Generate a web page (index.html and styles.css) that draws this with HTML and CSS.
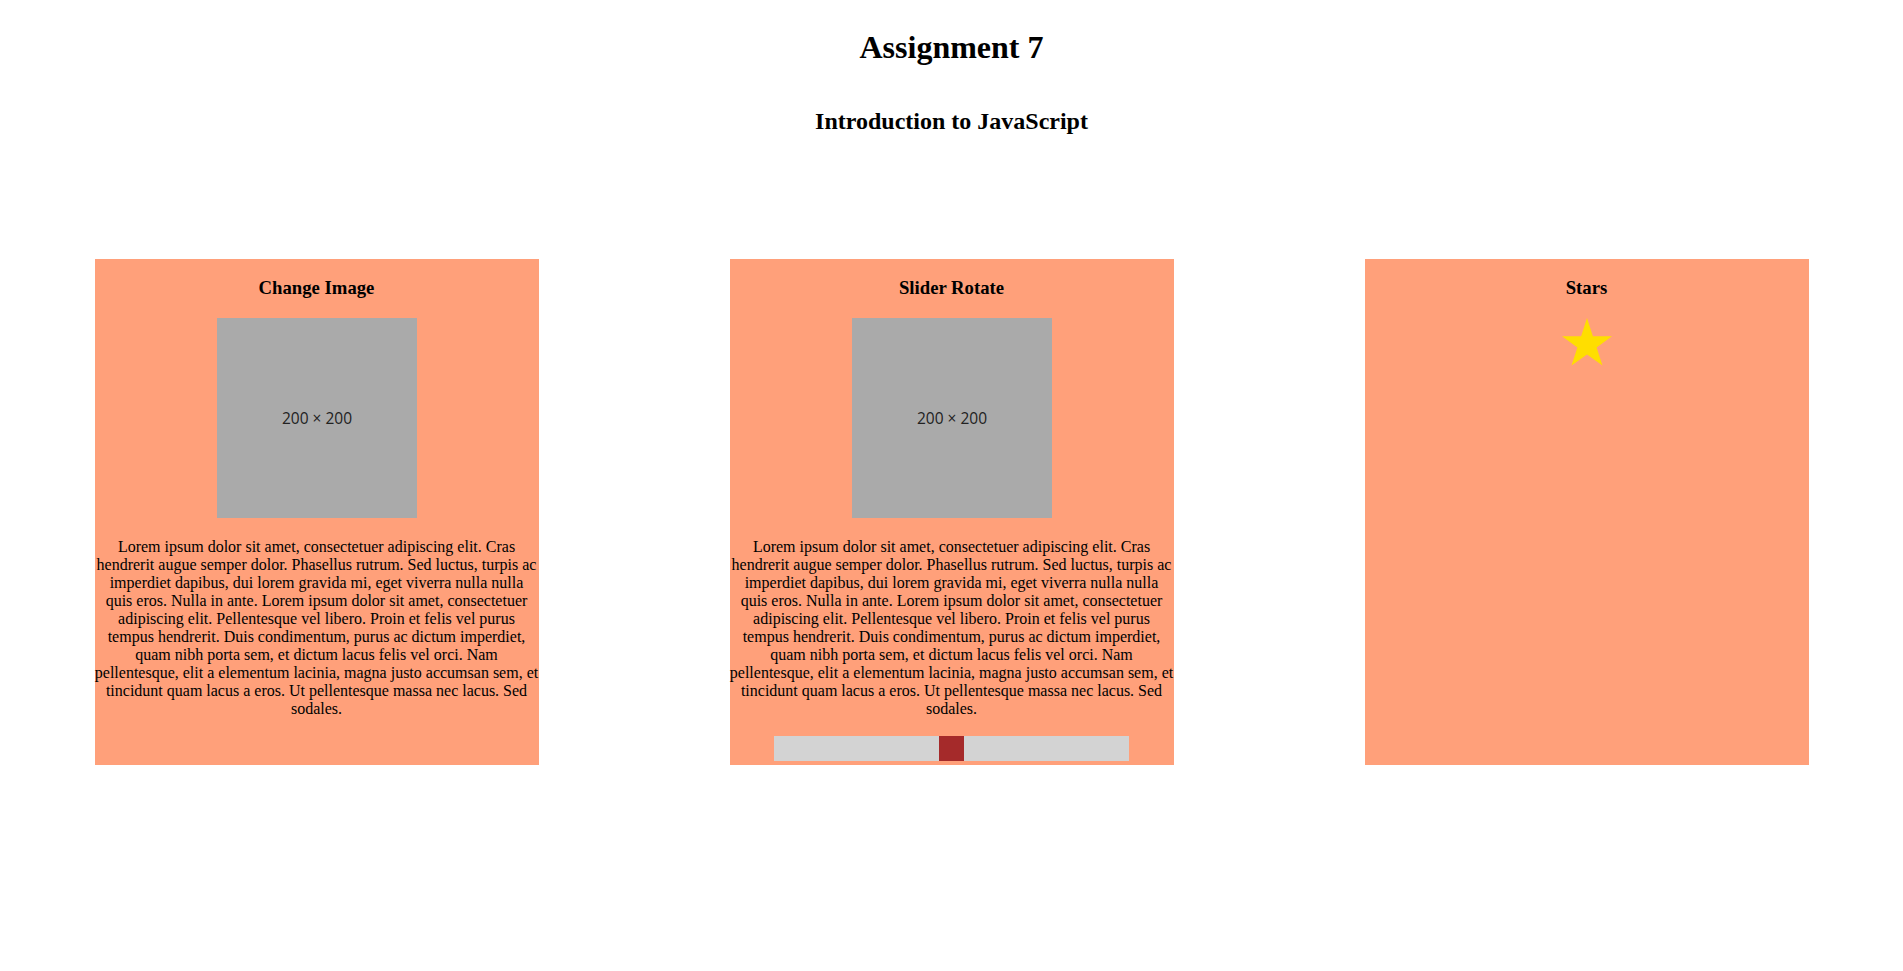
FILE: index.html
```html
<!DOCTYPE html>
<html lang="en">
<head>
<meta charset="utf-8">
<title>Assignment 7</title>
<link rel="stylesheet" href="styles.css">
</head>
<body>
<header class="page-header">
  <h1>Assignment 7</h1>
  <h2>Introduction to JavaScript</h2>
</header>
<main class="cards">
  <section class="card">
    <h3>Change Image</h3>
    <svg class="placeholder" width="200" height="200" viewBox="0 0 200 200"><rect width="200" height="200" fill="#aaaaaa"/><text x="100" y="106" text-anchor="middle" class="ph-text">200 × 200</text></svg>
    <p>Lorem ipsum dolor sit amet, consectetuer adipiscing elit. Cras hendrerit augue semper dolor. Phasellus rutrum. Sed luctus, turpis ac imperdiet dapibus, dui lorem gravida mi, eget viverra nulla nulla quis eros. Nulla in ante. Lorem ipsum dolor sit amet, consectetuer adipiscing elit. Pellentesque vel libero. Proin et felis vel purus tempus hendrerit. Duis condimentum, purus ac dictum imperdiet, quam nibh porta sem, et dictum lacus felis vel orci. Nam pellentesque, elit a elementum lacinia, magna justo accumsan sem, et tincidunt quam lacus a eros. Ut pellentesque massa nec lacus. Sed sodales.</p>
  </section>
  <section class="card">
    <h3>Slider Rotate</h3>
    <svg class="placeholder" width="200" height="200" viewBox="0 0 200 200"><rect width="200" height="200" fill="#aaaaaa"/><text x="100" y="106" text-anchor="middle" class="ph-text">200 × 200</text></svg>
    <p>Lorem ipsum dolor sit amet, consectetuer adipiscing elit. Cras hendrerit augue semper dolor. Phasellus rutrum. Sed luctus, turpis ac imperdiet dapibus, dui lorem gravida mi, eget viverra nulla nulla quis eros. Nulla in ante. Lorem ipsum dolor sit amet, consectetuer adipiscing elit. Pellentesque vel libero. Proin et felis vel purus tempus hendrerit. Duis condimentum, purus ac dictum imperdiet, quam nibh porta sem, et dictum lacus felis vel orci. Nam pellentesque, elit a elementum lacinia, magna justo accumsan sem, et tincidunt quam lacus a eros. Ut pellentesque massa nec lacus. Sed sodales.</p>
    <input class="slider" type="range" min="0" max="100" value="50">
  </section>
  <section class="card">
    <h3>Stars</h3>
    <svg class="star" width="50" height="48" viewBox="0 0 50 48"><polygon points="25,0 30.9,18.2 50,18.2 34.6,29.4 40.5,47.6 25,36.4 9.5,47.6 15.4,29.4 0,18.2 19.1,18.2" fill="#ffde00"/></svg>
  </section>
</main>
</body>
</html>
```

FILE: styles.css
```css
body {
  margin: 8px;
  font-family: "Liberation Serif", "Times New Roman", serif;
  font-size: 16px;
  color: #000;
  background: #fff;
}

.page-header {
  display: flex;
  flex-direction: column;
  align-items: center;
}

.page-header h1 {
  font-size: 32px;
  margin: 21.44px 0;
}

.page-header h2 {
  font-size: 24px;
  margin: 19.92px 0;
}

.cards {
  display: flex;
  justify-content: center;
  gap: 191px;
  margin-top: 104px;
}

.card {
  display: flow-root;
  width: 444px;
  height: 506px;
  background: #ffa07a;
  text-align: center;
}

.card h3 {
  font-size: 18.72px;
  margin: 18.72px 0;
}

.card p {
  margin: 16px 0;
}

.ph-text {
  font-family: "Open Sans", "Noto Sans", sans-serif;
  font-size: 15.5px;
  fill: #222;
}

.slider {
  -webkit-appearance: none;
  appearance: none;
  width: 80%;
  height: 25px;
  margin: 2px;
  padding: 0;
  background: #d3d3d3;
  outline: none;
  border: none;
}

.slider::-webkit-slider-thumb {
  -webkit-appearance: none;
  appearance: none;
  width: 25px;
  height: 25px;
  background: #a52a2a;
  border: none;
  cursor: pointer;
}

.slider::-moz-range-thumb {
  width: 25px;
  height: 25px;
  background: #a52a2a;
  border: none;
  border-radius: 0;
}
```
